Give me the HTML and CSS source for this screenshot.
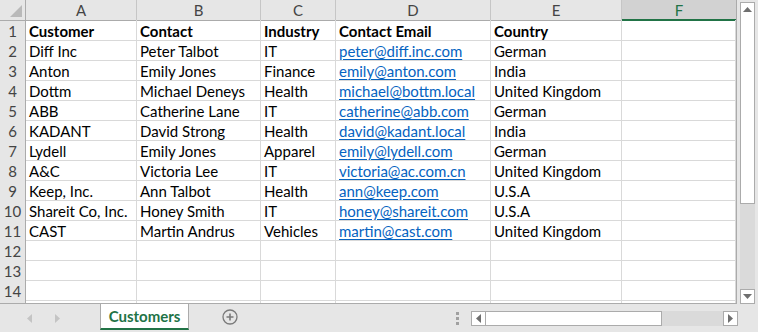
FILE: index.html
```html
<!DOCTYPE html>
<html>
<head>
<meta charset="utf-8">
<link rel="stylesheet" href="styles.css">
</head>
<body>
<div class="app">
  <div class="main">
    <div class="sheet">
      <div class="row head">
        <div class="c rh corner"><span class="tri"></span></div>
        <div class="c ch">A</div>
        <div class="c ch">B</div>
        <div class="c ch">C</div>
        <div class="c ch">D</div>
        <div class="c ch">E</div>
        <div class="c ch sel">F</div>
      </div>
      <div class="row"><div class="c rh">1</div><div class="c b">Customer</div><div class="c b">Contact</div><div class="c b">Industry</div><div class="c b">Contact Email</div><div class="c b">Country</div><div class="c"></div></div>
      <div class="row"><div class="c rh">2</div><div class="c">Diff Inc</div><div class="c">Peter Talbot</div><div class="c">IT</div><div class="c"><span class="lnk">peter@diff.inc.com</span></div><div class="c">German</div><div class="c"></div></div>
      <div class="row"><div class="c rh">3</div><div class="c">Anton</div><div class="c">Emily Jones</div><div class="c">Finance</div><div class="c"><span class="lnk">emily@anton.com</span></div><div class="c">India</div><div class="c"></div></div>
      <div class="row"><div class="c rh">4</div><div class="c">Dottm</div><div class="c">Michael Deneys</div><div class="c">Health</div><div class="c"><span class="lnk">michael@bottm.local</span></div><div class="c">United Kingdom</div><div class="c"></div></div>
      <div class="row"><div class="c rh">5</div><div class="c">ABB</div><div class="c">Catherine Lane</div><div class="c">IT</div><div class="c"><span class="lnk">catherine@abb.com</span></div><div class="c">German</div><div class="c"></div></div>
      <div class="row"><div class="c rh">6</div><div class="c">KADANT</div><div class="c">David Strong</div><div class="c">Health</div><div class="c"><span class="lnk">david@kadant.local</span></div><div class="c">India</div><div class="c"></div></div>
      <div class="row"><div class="c rh">7</div><div class="c">Lydell</div><div class="c">Emily Jones</div><div class="c">Apparel</div><div class="c"><span class="lnk">emily@lydell.com</span></div><div class="c">German</div><div class="c"></div></div>
      <div class="row"><div class="c rh">8</div><div class="c">A&amp;C</div><div class="c">Victoria Lee</div><div class="c">IT</div><div class="c"><span class="lnk">victoria@ac.com.cn</span></div><div class="c">United Kingdom</div><div class="c"></div></div>
      <div class="row"><div class="c rh">9</div><div class="c">Keep, Inc.</div><div class="c">Ann Talbot</div><div class="c">Health</div><div class="c"><span class="lnk">ann@keep.com</span></div><div class="c">U.S.A</div><div class="c"></div></div>
      <div class="row"><div class="c rh">10</div><div class="c">Shareit Co, Inc.</div><div class="c">Honey Smith</div><div class="c">IT</div><div class="c"><span class="lnk">honey@shareit.com</span></div><div class="c">U.S.A</div><div class="c"></div></div>
      <div class="row"><div class="c rh">11</div><div class="c">CAST</div><div class="c">Martin Andrus</div><div class="c">Vehicles</div><div class="c"><span class="lnk">martin@cast.com</span></div><div class="c">United Kingdom</div><div class="c"></div></div>
      <div class="row"><div class="c rh">12</div><div class="c"></div><div class="c"></div><div class="c"></div><div class="c"></div><div class="c"></div><div class="c"></div></div>
      <div class="row"><div class="c rh">13</div><div class="c"></div><div class="c"></div><div class="c"></div><div class="c"></div><div class="c"></div><div class="c"></div></div>
      <div class="row"><div class="c rh">14</div><div class="c"></div><div class="c"></div><div class="c"></div><div class="c"></div><div class="c"></div><div class="c"></div></div>
      <div class="row"><div class="c rh"></div><div class="c"></div><div class="c"></div><div class="c"></div><div class="c"></div><div class="c"></div><div class="c"></div></div>
    </div>
    <div class="vscroll">
      <div class="sbtn"><svg width="9" height="5" viewBox="0 0 9 5"><path d="M0 5 L4.5 0 L9 5Z" fill="#6f6f6f"/></svg></div>
      <div class="vthumb"></div>
      <div class="vtrack"></div>
      <div class="sbtn"><svg width="9" height="5" viewBox="0 0 9 5"><path d="M0 0 L4.5 5 L9 0Z" fill="#6f6f6f"/></svg></div>
    </div>
  </div>
  <div class="tabbar">
    <div class="nav">
      <svg width="5" height="9" viewBox="0 0 5 9"><path d="M5 0 L0 4.5 L5 9Z" fill="#c4c4c4"/></svg>
      <svg width="5" height="9" viewBox="0 0 5 9"><path d="M0 0 L5 4.5 L0 9Z" fill="#c4c4c4"/></svg>
    </div>
    <div class="tab">Customers</div>
    <div class="add"><svg width="16" height="16" viewBox="0 0 16 16"><circle cx="8" cy="8" r="7" fill="none" stroke="#7a7a7a" stroke-width="1.3"/><path d="M8 4.5 V11.5 M4.5 8 H11.5" stroke="#7a7a7a" stroke-width="1.6"/></svg></div>
    <div class="dots"><i></i><i></i><i></i></div>
    <div class="hscroll">
      <div class="sbtn h"><svg width="5" height="9" viewBox="0 0 5 9"><path d="M5 0 L0 4.5 L5 9Z" fill="#6f6f6f"/></svg></div>
      <div class="hthumb"></div>
      <div class="htrack"></div>
      <div class="sbtn h"><svg width="5" height="9" viewBox="0 0 5 9"><path d="M0 0 L5 4.5 L0 9Z" fill="#6f6f6f"/></svg></div>
    </div>
  </div>
</div>
</body>
</html>
```
FILE: styles.css
```css
* { box-sizing: border-box; }
html, body { margin: 0; padding: 0; }
body {
  width: 758px; height: 332px; overflow: hidden;
  background: #e6e6e6;
  font-family: Lato, "Liberation Sans", sans-serif;
  font-size: 15px;
  color: #000;
}
.app { display: flex; flex-direction: column; width: 758px; height: 332px; }
.main { display: flex; height: 304px; }
.sheet {
  width: 737px; height: 304px; overflow: hidden;
  background: #fff;
  border-right: 1px solid #ababab;
  border-bottom: 1px solid #ababab;
}
.row {
  display: grid;
  grid-template-columns: 26px 111px 124px 75px 155px 131px 114px;
  height: 20px;
}
.c {
  border-right: 1px solid #d9d9d9;
  border-bottom: 1px solid #d9d9d9;
  padding: 2px 0 0 3px;
  line-height: 18px;
  white-space: nowrap;
}
.b { font-weight: 700; }
.lnk { color: #0563c1; text-decoration: underline; text-underline-offset: 2px; }
.rh {
  background: #e6e6e6;
  color: #444;
  text-align: center;
  padding: 2px 0 0 0;
  border-right: 1px solid #ababab;
  border-bottom: 1px solid #d0d0d0;
}
.head .c { background: #e6e6e6; border-bottom: 1px solid #ababab; padding-top: 1px; }
.ch { text-align: center; color: #444; padding: 0; border-right: 1px solid #c6c6c6; }
.head .sel { background: #d2d2d2; color: #217346; border-bottom: 2px solid #217346; border-right: none; }
.corner { position: relative; }
.tri {
  position: absolute; right: 3px; bottom: 3px;
  width: 0; height: 0;
  border-left: 12px solid transparent;
  border-bottom: 12px solid #b9b9b9;
}
.vscroll {
  width: 21px; height: 304px;
  display: flex; flex-direction: column;
  padding: 2px 3px 0 3px;
}
.sbtn {
  width: 15px; height: 15px; flex: none;
  background: #fff; border: 1px solid #ababab;
  display: flex; align-items: center; justify-content: center;
}
.vthumb { flex: none; height: 188px; background: #fff; border: 1px solid #ababab; border-top: none; margin-top: -1px; }
.vtrack { flex: 1; background: #dadada; }
.tabbar { flex: 1; display: flex; align-items: stretch; position: relative; }
.nav { width: 100px; display: flex; align-items: center; gap: 23px; padding-left: 27px; }
.tab {
  width: 89px; height: 26px;
  background: #fff;
  border-left: 1px solid #ababab; border-right: 1px solid #ababab;
  border-bottom: 2px solid #217346;
  color: #217346; font-weight: 700; font-size: 15px;
  text-align: center; line-height: 25px;
}
.add { width: 60px; display: flex; align-items: center; padding-left: 33px; padding-bottom: 2px; }
.dots { width: 0; margin-left: 207px; display: flex; flex-direction: column; justify-content: center; gap: 2px; }
.dots i { display: block; width: 3px; height: 3px; background: #a0a0a0; }
.hscroll { display: flex; margin-left: 15px; margin-top: 7px; height: 15px; width: 267px; }
.sbtn.h { width: 15px; height: 15px; }
.hthumb { width: 176px; background: #fff; border: 1px solid #ababab; border-left: none; }
.htrack { width: 61px; background: #dadada; }
```
